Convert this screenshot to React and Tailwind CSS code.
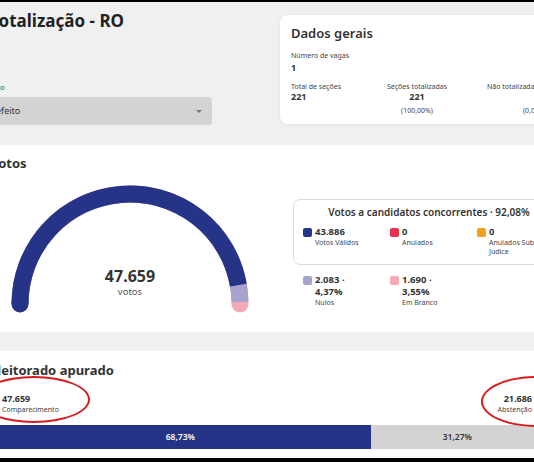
import React from "react";

const NAVY = "#263488";

// ─── Gauge ────────────────────────────────────────────────────────────────────
function Gauge() {
  const cx = 140, cy = 124, r = 110;
  const pt = (deg) => {
    const a = (deg * Math.PI) / 180;
    return [cx + r * Math.cos(a), cy - r * Math.sin(a)];
  };
  const arc = (from, to) => {
    const [x1, y1] = pt(from);
    const [x2, y2] = pt(to);
    return `M${x1},${y1} A${r},${r} 0 0 1 ${x2},${y2}`;
  };
  const [lx, ly] = pt(180);

  return (
    <div className="relative w-[280px] h-[140px] shrink-0">
      <svg width="280" height="140" viewBox="0 0 280 140">
        <path d={arc(180, 0)} fill="none" stroke="#f6a8b6" strokeWidth="17" strokeLinecap="round" />
        <path d={arc(180, 1)} fill="none" stroke="#a8a3cd" strokeWidth="17" />
        <path d={arc(180, 9.9)} fill="none" stroke={NAVY} strokeWidth="17" />
        <circle cx={lx} cy={ly} r="8.5" fill={NAVY} />
      </svg>
      <div className="absolute left-0 right-0 top-[86px] flex flex-col items-center">
        <span className="text-[16px] leading-[20px] font-bold text-[#333]">47.659</span>
        <span className="text-[9.5px] leading-[12px] text-[#555]">votos</span>
      </div>
    </div>
  );
}

function LegendItem({ color, value, label }) {
  return (
    <div className="w-[87px] shrink-0 flex items-start gap-[3px]">
      <span className="w-[9px] h-[9px] rounded-[2px] mt-[2px] shrink-0" style={{ background: color }} />
      <div className="flex flex-col">
        <span className="text-[9.5px] leading-[12px] font-bold text-[#333]">{value}</span>
        <span className="text-[7px] leading-[9px] text-[#444]">{label}</span>
      </div>
    </div>
  );
}

// ─── Main ─────────────────────────────────────────────────────────────────────
export default function App() {
  return (
    <div className="w-[534px] h-[462px] overflow-hidden bg-black pt-[2px] font-['Noto_Sans',sans-serif] text-[#333]">
      <div className="h-[456px] bg-[#f0f0f0] overflow-hidden">
        <div className="w-[586px] -ml-[26px]">

          {/* Header */}
          <div className="flex h-[143px] px-4">
            <div className="w-[290px] shrink-0 flex flex-col">
              <h1 className="mt-[7px] text-[17px] leading-[24px] font-bold text-[#222] whitespace-nowrap">Totalização - RO</h1>
              <span className="mt-[50px] -ml-[5px] text-[7px] leading-[10px] text-[#444]">Cargo</span>
              <div className="mt-[4px] -ml-[17px] w-[239px] h-[28px] bg-[#d3d3d3] rounded-[3px] flex items-center justify-between pl-[14px] pr-[10px]">
                <span className="text-[9px] text-[#333]">Prefeito</span>
                <svg width="6" height="3" viewBox="0 0 6 3"><path d="M0 0 L6 0 L3 3 Z" fill="#777" /></svg>
              </div>
            </div>

            <div className="mt-[13px] w-[290px] h-[109px] shrink-0 bg-white rounded-[8px] shadow-[0_1px_4px_rgba(0,0,0,0.07)] pl-[11px] pt-[9px]">
              <h2 className="text-[13px] leading-[18px] font-semibold text-[#333]">Dados gerais</h2>
              <p className="mt-[9px] text-[7px] leading-[9px] text-[#444]">Número de vagas</p>
              <p className="mt-[2px] text-[9px] leading-[11px] font-bold">1</p>
              <div className="mt-[9px] flex">
                <div className="w-[81px] shrink-0 flex flex-col">
                  <span className="text-[7px] leading-[9px] text-[#444]">Total de seções</span>
                  <span className="text-[9px] leading-[11px] font-bold">221</span>
                </div>
                <div className="w-[90px] shrink-0 flex flex-col items-center">
                  <span className="text-[7px] leading-[9px] text-[#444]">Seções totalizadas</span>
                  <span className="text-[9px] leading-[11px] font-bold">221</span>
                  <span className="mt-[4px] text-[7px] leading-[9px] text-[#444]">(100,00%)</span>
                </div>
                <div className="ml-[25px] w-[90px] shrink-0 flex flex-col items-start">
                  <span className="text-[7px] leading-[9px] text-[#444] whitespace-nowrap">Não totalizadas</span>
                  <span className="ml-[50px] text-[9px] leading-[11px] font-bold">0</span>
                  <span className="mt-[4px] ml-[36px] text-[7px] leading-[9px] text-[#444]">(0,00%)</span>
                </div>
              </div>
            </div>
          </div>

          {/* Votos */}
          <div className="h-[187px] bg-white px-4 pt-[9px]">
            <h2 className="text-[13px] leading-[18px] font-bold text-[#333]">Votos</h2>
            <div className="mt-[8px] flex">
              <Gauge />
              <div className="ml-[23px] mt-[19px] w-[263px] shrink-0">
                <div className="border border-[#dcdcdc] rounded-[7px] pl-[9px] pt-[5px] pb-[8px]">
                  <p className="text-center text-[10px] leading-[14px] font-semibold text-[#333] whitespace-nowrap">Votos a candidatos concorrentes · 92,08%</p>
                  <div className="mt-[7px] flex">
                    <LegendItem color={NAVY} value="43.886" label="Votos Válidos" />
                    <LegendItem color="#e8304f" value="0" label="Anulados" />
                    <LegendItem color="#f5a01b" value="0" label={<>Anulados Sub<br />Judice</>} />
                  </div>
                </div>
                <div className="mt-[9px] pl-[10px] flex">
                  <LegendItem color="#a8a3cd" value={<>2.083 ·<br />4,37%</>} label="Nulos" />
                  <LegendItem color="#f6a8b6" value={<>1.690 ·<br />3,55%</>} label="Em Branco" />
                </div>
              </div>
            </div>
          </div>

          {/* Eleitorado apurado */}
          <div className="relative mt-[19px] h-[110px] bg-white px-4 pt-[10px]">
            <h2 className="text-[13px] leading-[18px] font-bold text-[#333]">Eleitorado apurado</h2>
            <div className="mt-[14px] flex justify-between">
              <div className="flex flex-col ml-[12px]">
                <span className="text-[9px] leading-[12px] font-bold">47.659</span>
                <span className="text-[7px] leading-[9px] text-[#444]">Comparecimento</span>
              </div>
              <div className="flex flex-col items-end mr-[12px]">
                <span className="text-[9px] leading-[12px] font-bold">21.686</span>
                <span className="text-[7px] leading-[9px] text-[#444]">Abstenção</span>
              </div>
            </div>
            <div className="mt-[11px] h-[24px] flex text-[8.5px] font-semibold">
              <div className="h-full flex items-center justify-center text-white" style={{ width: "68.73%", background: NAVY }}>68,73%</div>
              <div className="h-full flex items-center justify-center bg-[#d3d3d3] text-[#333]" style={{ width: "31.27%" }}>31,27%</div>
            </div>
            <div className="absolute left-[4px] top-[25px] w-[112px] h-[47px] rounded-[50%] border-[2.5px] border-[#d61d1d]" />
            <div className="absolute left-[507px] top-[25px] w-[110px] h-[51px] rounded-[50%] border-[2.5px] border-[#d61d1d]" />
          </div>

        </div>
      </div>
    </div>
  );
}
